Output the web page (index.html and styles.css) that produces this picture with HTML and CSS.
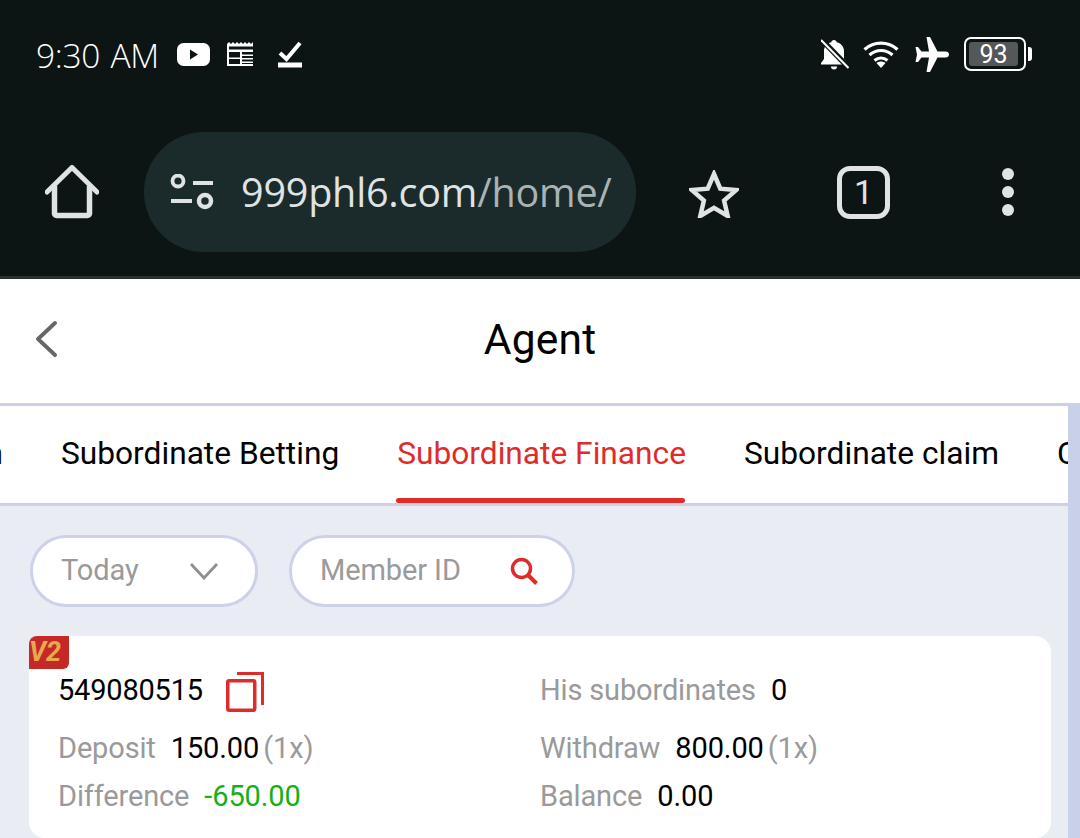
FILE: index.html
```html
<!DOCTYPE html>
<html lang="en">
<head>
<meta charset="utf-8">
<title>Agent</title>
<link rel="stylesheet" href="styles.css">
</head>
<body>
<div class="phone">
  <header class="browser">
    <div class="status">
      <span class="time">9:30 AM</span>
      <svg class="ic-yt" viewBox="0 0 33 23"><rect width="33" height="23" rx="6.500" fill="#fff"/><path d="M13 6.500l8 5-8 5z" fill="#0c1414"/></svg>
      <svg class="ic-news" viewBox="0 0 28 24"><path d="M0 2l2-2 2 2 2-2 2 2 2-2 2 2 2-2 2 2 2-2 2 2 2-2 2 2 2-2v24H0z" fill="#fff"/><path d="M2 4.500h24V22H2z" fill="#0c1414"/><path d="M2 7.500h24V10H2zM13 10h2v12h-2zM2 15.500h11V17H2zM15 12.500h11V14H15zM15 16h11v1.500H15zM15 19.500h11V21H15z" fill="#fff"/></svg>
      <svg class="ic-check" viewBox="0 0 24 28"><path d="M2 13l6.500 6L22 3" fill="none" stroke="#fff" stroke-width="4"/><rect y="22.500" width="24" height="5" fill="#fff"/></svg>
      <span class="spacer"></span>
      <svg class="ic-bell" viewBox="0 0 28 32"><path d="M13 1c1.500 0 2.500 1 2.700 2.200C20.500 4.500 23 8 23 12v8l3 4v1.500H0V24l3-4v-8c0-4 2.500-7.500 7.300-8.800C10.500 2 11.500 1 13 1z" fill="#fff"/><path d="M10 27.500h6a3 3 0 0 1-6 0z" fill="#fff"/><path d="M-1 -1l29 30" stroke="#0c1414" stroke-width="5.500"/><path d="M0 1l27.500 28" stroke="#fff" stroke-width="2.200"/></svg>
      <svg class="ic-wifi" viewBox="0 0 36 28"><g fill="none" stroke="#fff" stroke-width="3.200"><path d="M1.500 9.500C11 1 25 1 34.500 9.500"/><path d="M6.500 15c7-6 16-6 23 0"/><path d="M11.500 20.500c4-3.300 9-3.300 13 0"/></g><path d="M18 28l-4.500-5c2.700-2 6.300-2 9 0z" fill="#fff"/></svg>
      <svg class="ic-plane" viewBox="0 0 34 35"><path d="M11.500 0h3.500l7.500 14.500h8c2 0 3.500 1.300 3.500 3s-1.500 3-3.500 3h-8L15 35h-3.500l2.500-14.500H6.500L3 25H0.500L2 17.500 0.500 10H3l3.500 4.500H14z" fill="#fff"/></svg>
      <div class="battery">
        <div class="battery-shell"><span class="battery-level">93</span></div>
        <span class="battery-tip"></span>
      </div>
    </div>
    <div class="toolbar">
      <svg class="ic-home" viewBox="0 0 54 54"><path d="M2 27L27 2.500 52 27" fill="none" stroke="#dfe3e3" stroke-width="5" stroke-linecap="round" stroke-linejoin="round"/><path d="M9.500 21v27.500a2 2 0 0 0 2 2h31a2 2 0 0 0 2-2V21" fill="none" stroke="#dfe3e3" stroke-width="5.500"/></svg>
      <div class="omnibox">
        <svg class="ic-tune" viewBox="0 0 44 38"><g fill="none" stroke="#dfe3e3"><circle cx="8" cy="7" r="5.500" stroke-width="3.800"/><circle cx="35" cy="27" r="6" stroke-width="4.500"/><path d="M23 9h20M1 27h21" stroke-width="4"/></g></svg>
        <span class="url"><span class="host">999phl6.com</span>/home/</span>
      </div>
      <svg class="ic-star" viewBox="0 0 50 48"><path d="M25 4l6.300 14.700 15.700 1.400-11.900 10.400 3.600 15.500L25 37.800l-13.700 8.200 3.600-15.500L3 20.100l15.700-1.400z" fill="none" stroke="#dfe3e3" stroke-width="4.500" stroke-linejoin="miter"/></svg>
      <div class="tabcount">1</div>
      <div class="dots"><i></i><i></i><i></i></div>
    </div>
  </header>

  <nav class="title-bar">
    <svg class="ic-back" viewBox="0 0 24 36"><path d="M21 2L4 18l17 16" fill="none" stroke="#666" stroke-width="3.800" stroke-linecap="round" stroke-linejoin="round"/></svg>
    <h1 class="title">Agent</h1>
  </nav>

  <div class="scroller">
    <main class="content">
      <div class="tabs">
        <div class="tab tab-first">Commission</div>
        <div class="tab">Subordinate Betting</div>
        <div class="tab tab-active">Subordinate Finance</div>
        <div class="tab">Subordinate claim</div>
        <div class="tab">Claim</div>
      </div>
      <div class="panel">
        <div class="filters">
          <div class="pill pill-date">
            <span class="placeholder">Today</span>
            <svg class="ic-chev" viewBox="0 0 30 18"><path d="M2 2l13 14L28 2" fill="none" stroke="#8f8f8f" stroke-width="2.800"/></svg>
          </div>
          <div class="pill pill-search">
            <span class="placeholder">Member ID</span>
            <svg class="ic-search" viewBox="0 0 28 28"><circle cx="11.500" cy="11.500" r="9" fill="none" stroke="#e02b2b" stroke-width="3.500"/><path d="M18 18L26.500 26.500" stroke="#e02b2b" stroke-width="4"/></svg>
          </div>
        </div>
        <article class="card">
          <span class="badge">V2</span>
          <div class="grid">
            <div class="cell cell-id">
              <span class="val member-id">549080515</span>
              <svg class="ic-copy" viewBox="0 0 38 40"><rect x="1.750" y="8.750" width="27" height="29.500" rx="1.500" fill="none" stroke="#e02b2b" stroke-width="3.500"/><path d="M11 1.500h25.500V33" fill="none" stroke="#e02b2b" stroke-width="3"/></svg>
            </div>
            <div class="cell cell-id"><span class="lbl">His subordinates</span><span class="val">0</span></div>
            <div class="cell"><span class="lbl">Deposit</span><span class="val">150.00</span><span class="lbl mult">(1x)</span></div>
            <div class="cell"><span class="lbl">Withdraw</span><span class="val">800.00</span><span class="lbl mult">(1x)</span></div>
            <div class="cell"><span class="lbl">Difference</span><span class="val neg">-650.00</span></div>
            <div class="cell"><span class="lbl">Balance</span><span class="val">0.00</span></div>
          </div>
        </article>
      </div>
    </main>
    <div class="rail"></div>
  </div>
</div>
</body>
</html>
```
FILE: styles.css
```css
* { box-sizing: border-box; }
html, body { margin: 0; padding: 0; }
body { width: 1080px; height: 838px; overflow: hidden; font-family: Roboto, "Liberation Sans", sans-serif; background: #e9ecf3; }
svg { display: block; flex: none; }
.phone { display: flex; flex-direction: column; height: 838px; overflow: hidden; }

/* browser chrome */
.browser { height: 279px; flex: none; background: #0c1414; border-bottom: 3px solid #2b3031; display: flex; flex-direction: column; }
.status { display: flex; align-items: center; height: 108px; padding: 0 48px 0 36px; color: #fff; }
.time { font-family: "Open Sans", sans-serif; font-size: 33.500px; font-weight: 300; letter-spacing: -.3px; word-spacing: 2px; width: 122px; white-space: nowrap; margin-top: 1px; }
.ic-yt { width: 33px; height: 23px; margin-left: 19px; }
.ic-news { width: 28px; height: 24px; margin-left: 17px; }
.ic-check { width: 24px; height: 28px; margin-left: 23px; margin-top: -1px; }
.spacer { flex: 1; }
.ic-bell { width: 28px; height: 32px; margin-top: 1px; margin-right: 1px; }
.ic-wifi { width: 36px; height: 28px; margin-left: 13px; }
.ic-plane { width: 34px; height: 35px; margin-left: 16px; }
.battery { display: flex; align-items: center; margin-left: 15px; }
.battery-shell { width: 62px; height: 34px; border: 2.500px solid #fff; border-radius: 7px; padding: 3px; }
.battery-level { display: block; height: 100%; background: #555859; border-radius: 3px; color: #fff; font-size: 25px; line-height: 26px; text-align: center; width: 49px; }
.battery-tip { width: 4px; height: 14px; background: #fff; border-radius: 0 3px 3px 0; margin-left: 2px; }

.toolbar { display: flex; align-items: center; height: 120px; margin-top: 24px; padding-left: 45px; }
.ic-home { width: 54px; height: 54px; }
.omnibox { width: 492px; height: 120px; margin-left: 45px; border-radius: 60px; background: #1b2b2c; display: flex; align-items: center; padding-left: 26px; }
.ic-tune { width: 44px; height: 38px; margin-top: 2px; }
.url { margin-left: 27px; font-family: "Open Sans", sans-serif; font-size: 39.500px; color: #a9b3b3; white-space: nowrap; letter-spacing: -.2px; }
.host { color: #dfe3e3; }
.ic-star { width: 50px; height: 48px; margin-left: 53px; margin-top: 4px; }
.tabcount { width: 53px; height: 53px; margin-left: 98px; border: 5px solid #dfe3e3; border-radius: 13px; color: #dfe3e3; font-size: 34px; display: flex; align-items: center; justify-content: center; }
.dots { display: flex; flex-direction: column; gap: 6px; margin-left: 112px; }
.dots i { display: block; width: 12px; height: 12px; border-radius: 50%; background: #dfe3e3; }

/* title */
.title-bar { height: 124px; flex: none; background: #fff; display: flex; align-items: center; justify-content: center; position: relative; padding-bottom: 4px; }
.title { margin: 0; font-size: 42.500px; font-weight: 400; color: #000; letter-spacing: .2px; }
.ic-back { position: absolute; left: 34px; top: 42px; width: 24px; height: 36px; }

/* scrolling page */
.scroller { flex: 1; display: grid; grid-template-columns: 1fr 12px; border-top: 3px solid #ced1e6; min-height: 0; }
.rail { background: #c9d0ea; }
.content { min-width: 0; overflow: hidden; display: flex; flex-direction: column; }
.tabs { display: flex; height: 100px; flex: none; background: #fff; border-bottom: 3px solid #ced1e6; overflow: hidden; }
.tab { flex: none; padding: 0 29px; font-size: 31.700px; line-height: 96px; color: #000; position: relative; white-space: nowrap; }
.tab-first { margin-left: -204px; }
.tab-active { color: #e02b2b; }
.tab-active::after { content: ""; position: absolute; left: 28px; right: 30px; bottom: 0; height: 5px; border-radius: 3px; background: #e02b2b; }

.panel { flex: 1; padding: 29px 17px 0 29px; display: flex; flex-direction: column; gap: 29px; background: #e9ecf3; }
.filters { display: flex; gap: 31px; padding-left: 1px; }
.pill { height: 72px; border: 3px solid #cdd2ea; border-radius: 36px; background: #fff; display: flex; align-items: center; justify-content: space-between; }
.pill-date { width: 228px; padding: 0 36px 0 28px; }
.pill-search { width: 286px; padding: 0 34px 0 28px; }
.placeholder { font-size: 29px; color: #9a9a9a; margin-bottom: 3px; letter-spacing: -.1px; }
.ic-chev { width: 30px; height: 18px; }
.ic-search { width: 28px; height: 28px; }

.card { flex: 1; background: #fff; border-radius: 16px; position: relative; padding: 32px 29px 0; }
.badge { position: absolute; left: 0; top: 0; width: 40px; height: 33px; background: #c62828; border-radius: 8px 0 6px 0; color: #e6a94e; font-size: 27px; font-weight: 700; font-style: italic; line-height: 32px; }
.grid { display: grid; grid-template-columns: 482px 1fr; grid-template-rows: 56px 48px 48px; }
.cell { display: flex; align-items: center; gap: 15px; font-size: 29px; white-space: nowrap; height: 48px; }
.cell-id { height: 44px; }
.lbl { color: #9a9a9a; letter-spacing: -.15px; }
.val { color: #000; letter-spacing: -.1px; }
.member-id { letter-spacing: -.2px; }
.mult { margin-left: -11px; }
.neg { color: #16b016; }
.ic-copy { width: 38px; height: 40px; margin-left: 8px; margin-top: 3px; }
```
